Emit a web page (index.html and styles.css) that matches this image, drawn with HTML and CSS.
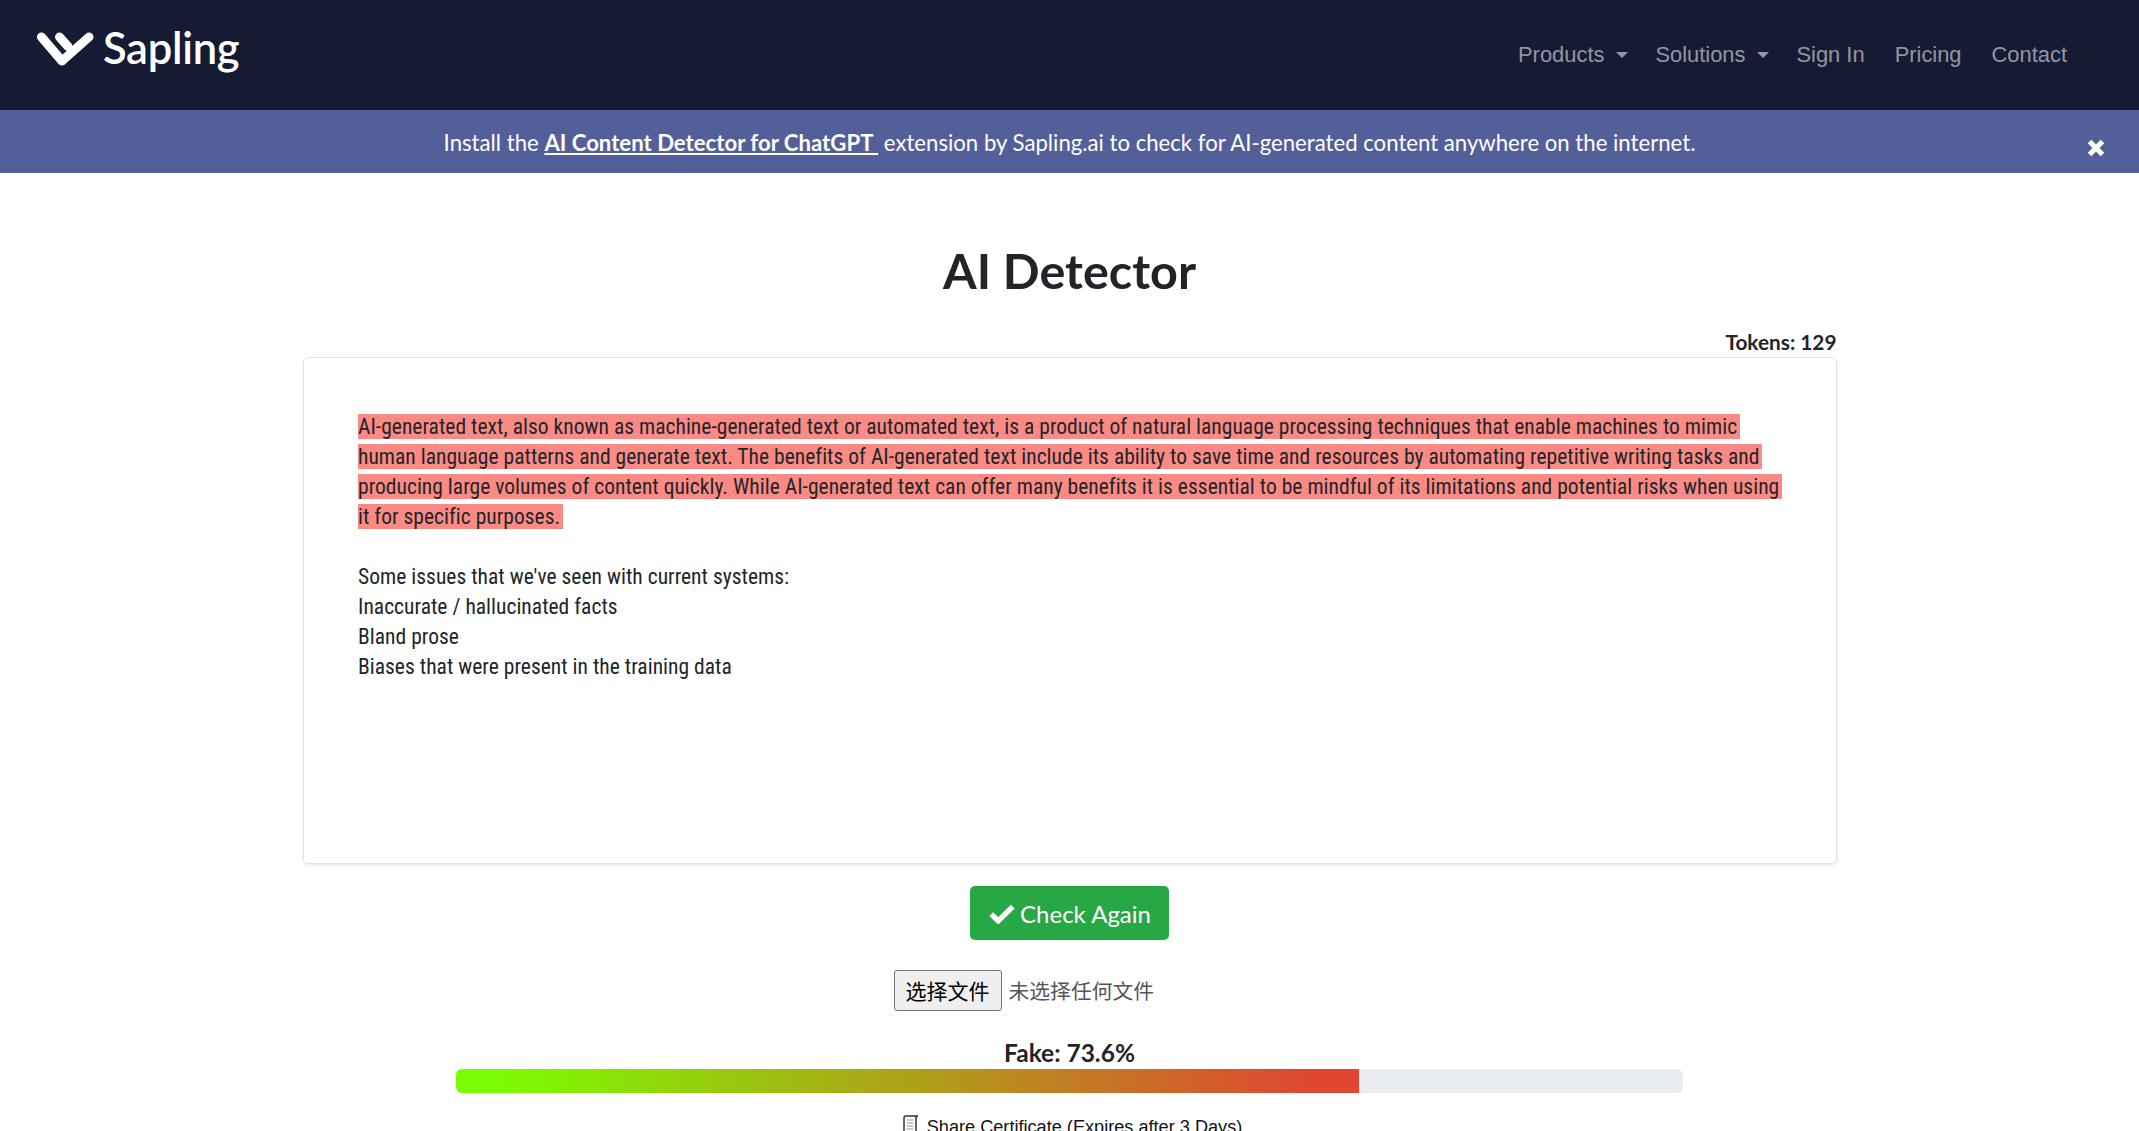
FILE: index.html
```html
<!DOCTYPE html>
<html lang="en">
<head>
<meta charset="utf-8">
<title>AI Detector - Sapling</title>
<link rel="stylesheet" href="styles.css">
</head>
<body>
<header class="navbar">
  <a class="brand" href="#">
    <svg class="brand-mark" viewBox="0 0 56 34" aria-hidden="true">
      <path d="M4 5 L24.500 29 L51.500 5" class="mark-stroke"/>
      <path d="M22 5 L30.500 14.500" class="mark-stroke"/>
    </svg>
    <span class="brand-name">Sapling</span>
  </a>
  <nav class="nav-links">
    <a href="#" class="nav-link">Products<i class="caret"></i></a>
    <a href="#" class="nav-link">Solutions<i class="caret"></i></a>
    <a href="#" class="nav-link">Sign In</a>
    <a href="#" class="nav-link">Pricing</a>
    <a href="#" class="nav-link">Contact</a>
  </nav>
</header>
<div class="banner">
  <p class="banner-text">Install the <a href="#">AI Content Detector for ChatGPT&nbsp;</a> extension by Sapling.ai to check for AI-generated content anywhere on the internet.</p>
  <svg class="banner-close" viewBox="0 0 18 18" aria-hidden="true"><path d="M2.500 2.500 L15.500 15.500 M15.500 2.500 L2.500 15.500"/></svg>
</div>
<main class="page">
  <h1 class="title">AI Detector</h1>
  <div class="tokens">Tokens: 129</div>
  <section class="editor">
    <p class="para"><span class="hl">AI-generated text, also known as machine-generated text or automated text, is a product of natural language processing techniques that enable machines to mimic human language patterns and generate text. The benefits of AI-generated text include its ability to save time and resources by automating repetitive writing tasks and producing large volumes of content quickly. While AI-generated text can offer many benefits it is essential to be mindful of its limitations and potential risks when using it for specific purposes.</span></p>
    <p class="para para-gap">Some issues that we've seen with current systems:<br>Inaccurate / hallucinated facts<br>Bland prose<br>Biases that were present in the training data</p>
  </section>
  <button class="check-btn" type="button">
    <svg class="check-icon" viewBox="0 0 26 20" preserveAspectRatio="none" aria-hidden="true"><path d="M3 10.500 L9.500 17 L23 3.500"/></svg>Check Again
  </button>
  <div class="file-row">
    <span class="file-btn">选择文件</span><span class="file-label">未选择任何文件</span>
  </div>
  <div class="score">Fake: 73.6%</div>
  <div class="progress"><div class="progress-fill" style="width:73.6%"></div></div>
  <div class="share">
    <svg class="share-icon" viewBox="0 0 16 20" aria-hidden="true"><path class="scroll-outline" d="M1.500 20 V3 Q1.500 1 3.500 1 H15.500 Q13.500 1 13.500 3 V20 Z"/><path class="scroll-lines" d="M4 5 H11 M4 8 H11 M4 11 H11 M4 14 H11 M4 17 H11"/></svg>
    <span>Share Certificate (Expires after 3 Days)</span>
  </div>
</main>
</body>
</html>
```
FILE: styles.css
```css
* { box-sizing: border-box; }
html, body { margin: 0; height: 1131px; overflow: hidden; }
body { background: #fff; color: #212529; font-family: "Lato", "Open Sans", sans-serif; }
.navbar { height: 110px; background: #151b33; display: flex; align-items: center; justify-content: space-between; padding: 0 72px 0 37px; }
.brand { display: flex; align-items: center; gap: 9px; color: #fff; text-decoration: none; margin-top: -12px; }
.brand-mark { width: 57px; height: 34px; display: block; }
.mark-stroke { fill: none; stroke: #fff; stroke-width: 9; stroke-linecap: round; stroke-linejoin: round; }
.brand-name { font-size: 43.500px; font-weight: 600; line-height: 50px; letter-spacing: -.3px; margin-top: -4px; }
.nav-links { display: flex; align-items: center; gap: 30px; }
.nav-link { color: rgba(255,255,255,.55); text-decoration: none; font: 21.900px/30px "Liberation Sans", Arial, sans-serif; display: flex; align-items: center; }
.caret { display: block; width: 0; height: 0; margin: 0 -3px 0 12px; border-top: 6px solid rgba(255,255,255,.55); border-left: 6px solid transparent; border-right: 6px solid transparent; }
.banner { height: 63px; background: #535f99; color: #fff; position: relative; display: flex; align-items: center; justify-content: center; }
.banner-text { margin: 2px 0 0; font-size: 22.160px; line-height: 30px; }
.banner-text a { color: #fff; font-weight: 700; text-decoration: underline; }
.banner-close { position: absolute; right: 34px; top: 29px; width: 18px; height: 18px; }
.banner-close path { stroke: #fff; stroke-width: 5; fill: none; }
.page { width: 1534px; margin: 0 auto; display: flex; flex-direction: column; align-items: center; }
.title { margin: 69px 0 0; font-size: 48.500px; line-height: 56px; font-weight: 700; text-align: center; }
.tokens { align-self: flex-end; margin-top: 32px; font-size: 20.800px; line-height: 24px; font-weight: 700; }
.editor { width: 100%; height: 507px; margin-top: 3px; border: 1px solid #e3e3e3; border-radius: 5px; box-shadow: 0 2px 3px rgba(0,0,0,.08); padding: 54px 47px 0 54.500px; font-family: "Roboto", sans-serif; font-size: 21.500px; font-stretch: 75%; letter-spacing: .025px; line-height: 30px; }
.para { margin: 0; }
.para-gap { margin-top: 30px; }
.hl { background: #fc8a84; padding: 0 3px 0 0; -webkit-box-decoration-break: clone; box-decoration-break: clone; }
.check-btn { margin-top: 22px; height: 54px; width: 199px; background: #28a745; color: #fff; border: 0; border-radius: 5px; font-family: "Lato", sans-serif; font-size: 24px; display: flex; align-items: center; justify-content: center; gap: 4px; padding: 0; flex: none; }
.check-icon { width: 28px; height: 21px; }
.check-icon path { fill: none; stroke: #fff; stroke-width: 5; }
.file-row { display: flex; align-items: center; width: 352px; margin-top: 30px; height: 41px; flex: none; }
.file-btn { width: 108px; height: 41px; background: #efefef; border: 1px solid #767676; border-radius: 3px; color: #000; font: 21px/39px "Noto Sans CJK SC", sans-serif; text-align: center; flex: none; }
.file-label { margin-left: 7px; color: #555; font: 20.800px/41px "Noto Sans CJK SC", sans-serif; white-space: nowrap; }
.score { margin-top: 28px; font-size: 24.500px; line-height: 28px; font-weight: 700; }
.progress { width: 1227px; height: 24px; margin-top: 2px; background: #e9ecef; border-radius: 6px; overflow: hidden; flex: none; }
.progress-fill { height: 100%; background: linear-gradient(90deg, #7cfc00 5%, #e04632 95%); }
.share { display: flex; align-items: flex-start; gap: 8px; margin-top: 22px; padding-left: 5px; font: 18.150px/24px "Liberation Sans", Arial, sans-serif; color: #111; flex: none; }
.share-icon { width: 17px; height: 20px; flex: none; }
.scroll-outline { fill: #fff; stroke: #333; stroke-width: 1.500; }
.scroll-lines { stroke: #999; stroke-width: 1; fill: none; }
```
